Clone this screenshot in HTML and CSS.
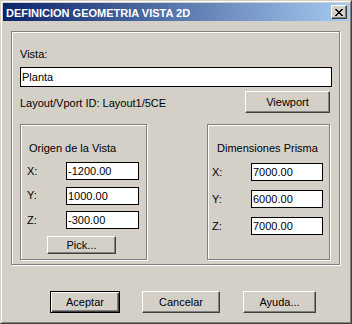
FILE: index.html
```html
<!DOCTYPE html>
<html lang="es">
<head>
    <title>DEFINICION GEOMETRIA VISTA 2D</title>
    <link rel="stylesheet" href="styles.css">
</head>
<body>
<div class="window">
    <div class="frame">
        <div class="titlebar">
            <span class="title">DEFINICION GEOMETRIA VISTA 2D</span>
            <button class="close" aria-label="Cerrar">
                <svg width="8" height="7" viewBox="0 0 8 7">
                    <path d="M0 0h2v1h1v1h2v-1h1v-1h2v1h-1v1h-1v1h-1v1h1v1h1v1h1v1h-2v-1h-1v-1h-2v1h-1v1h-2v-1h1v-1h1v-1h1v-1h-1v-1h-1v-1h-1z" fill="#000"/>
                </svg>
            </button>
        </div>
        <div class="content">
            <div class="group main">
                <div class="label">Vista:</div>
                <input class="field wide" type="text" value="Planta">
                <div class="id-row">
                    <span class="label id-label">Layout/Vport ID: Layout1/5CE</span>
                    <button class="btn viewport">Viewport</button>
                </div>
                <div class="subgroups">
                    <div class="group origin">
                        <div class="label group-title">Origen de la Vista</div>
                        <div class="coords">
                            <div class="coord-row"><span class="label">X:</span><input class="field" type="text" value="-1200.00"></div>
                            <div class="coord-row"><span class="label">Y:</span><input class="field" type="text" value="1000.00"></div>
                            <div class="coord-row"><span class="label">Z:</span><input class="field" type="text" value="-300.00"></div>
                            <button class="btn pick">Pick...</button>
                        </div>
                    </div>
                    <div class="group prism">
                        <div class="label group-title">Dimensiones Prisma</div>
                        <div class="coords">
                            <div class="coord-row"><span class="label">X:</span><input class="field" type="text" value="7000.00"></div>
                            <div class="coord-row"><span class="label">Y:</span><input class="field" type="text" value="6000.00"></div>
                            <div class="coord-row"><span class="label">Z:</span><input class="field" type="text" value="7000.00"></div>
                        </div>
                    </div>
                </div>
            </div>
            <div class="actions">
                <button class="btn default accept">Aceptar</button>
                <button class="btn cancel">Cancelar</button>
                <button class="btn help">Ayuda...</button>
            </div>
        </div>
    </div>
</div>
</body>
</html>
```

FILE: styles.css
```css
* {
  box-sizing: border-box;
}
body {
  margin: 0;
  font-family: "Liberation Sans", Arial, sans-serif;
  font-size: 11px;
  color: #000;
}
.window {
  width: 352px;
  height: 324px;
  background: #d4d0c8;
  border: 1px solid;
  border-color: #d4d0c8 #404040 #404040 #d4d0c8;
}
.frame {
  height: 100%;
  border: 1px solid;
  border-color: #fff #808080 #808080 #fff;
  padding: 1px;
}
.titlebar {
  height: 18px;
  display: flex;
  align-items: flex-start;
  justify-content: space-between;
  background: linear-gradient(to right, #0a246a, #a6caf0);
}
.title {
  color: #fff;
  font-weight: bold;
  line-height: 18px;
  padding: 1px 0 0 3px;
}
.close {
  width: 16px;
  height: 14px;
  margin: 2px 2px 0 0;
  padding: 0;
  display: flex;
  align-items: center;
  justify-content: center;
  background: #d4d0c8;
  border: 1px solid;
  border-color: #fff #404040 #404040 #fff;
  box-shadow: inset -1px -1px #808080;
}
.label {
  line-height: 13px;
  white-space: nowrap;
}
.field {
  font: inherit;
  height: 18px;
  padding: 0 0 0 1px;
  border: 1px solid #000;
  background: #fff;
  color: #000;
  outline: none;
}
.btn {
  font: inherit;
  color: #000;
  padding: 0;
  background: #d4d0c8;
  border: 1px solid;
  border-color: #fff #404040 #404040 #fff;
  box-shadow: inset -1px -1px #808080;
}
.btn.default {
  border: 1px solid #000;
  box-shadow: inset 1px 1px #fff, inset -1px -1px #404040, inset -2px -2px #808080;
}
.content {
  padding: 10px 0 0 8px;
}
.group {
  border: 1px solid #808080;
  box-shadow: inset 1px 1px #fff, 1px 1px #fff;
}
.main {
  width: 329px;
  height: 234px;
  padding: 16px 8px 0 8px;
}
.wide {
  display: block;
  width: 312px;
  height: 20px;
  margin-top: 6px;
}
.id-row {
  display: flex;
  justify-content: space-between;
  margin-top: 4px;
  padding-right: 1px;
}
.id-label {
  margin-top: 6px;
}
.viewport {
  width: 85px;
  height: 22px;
}
.subgroups {
  display: flex;
  gap: 60px;
  margin-top: 11px;
}
.origin {
  width: 127px;
  height: 136px;
  padding: 17px 0 0 8px;
}
.prism {
  width: 123px;
  height: 136px;
  padding: 17px 0 0 9px;
}
.coords {
  display: flex;
  flex-direction: column;
}
.origin .coords {
  margin: 7px 0 0 -2px;
  gap: 6.5px;
}
.prism .coords {
  margin: 8px 0 0 -5px;
  gap: 9px;
}
.coord-row {
  display: flex;
  align-items: center;
}
.coord-row .label {
  width: 39px;
}
.origin .field {
  width: 73px;
}
.prism .field {
  width: 72px;
}
.pick {
  width: 69px;
  height: 18px;
  margin-left: 20px;
}
.actions {
  display: flex;
  margin: 26px 0 0 39px;
}
.actions .btn {
  height: 22px;
}
.accept {
  width: 70px;
}
.cancel {
  width: 78px;
  margin-left: 22px;
}
.help {
  width: 73px;
  margin-left: 23px;
}
```
